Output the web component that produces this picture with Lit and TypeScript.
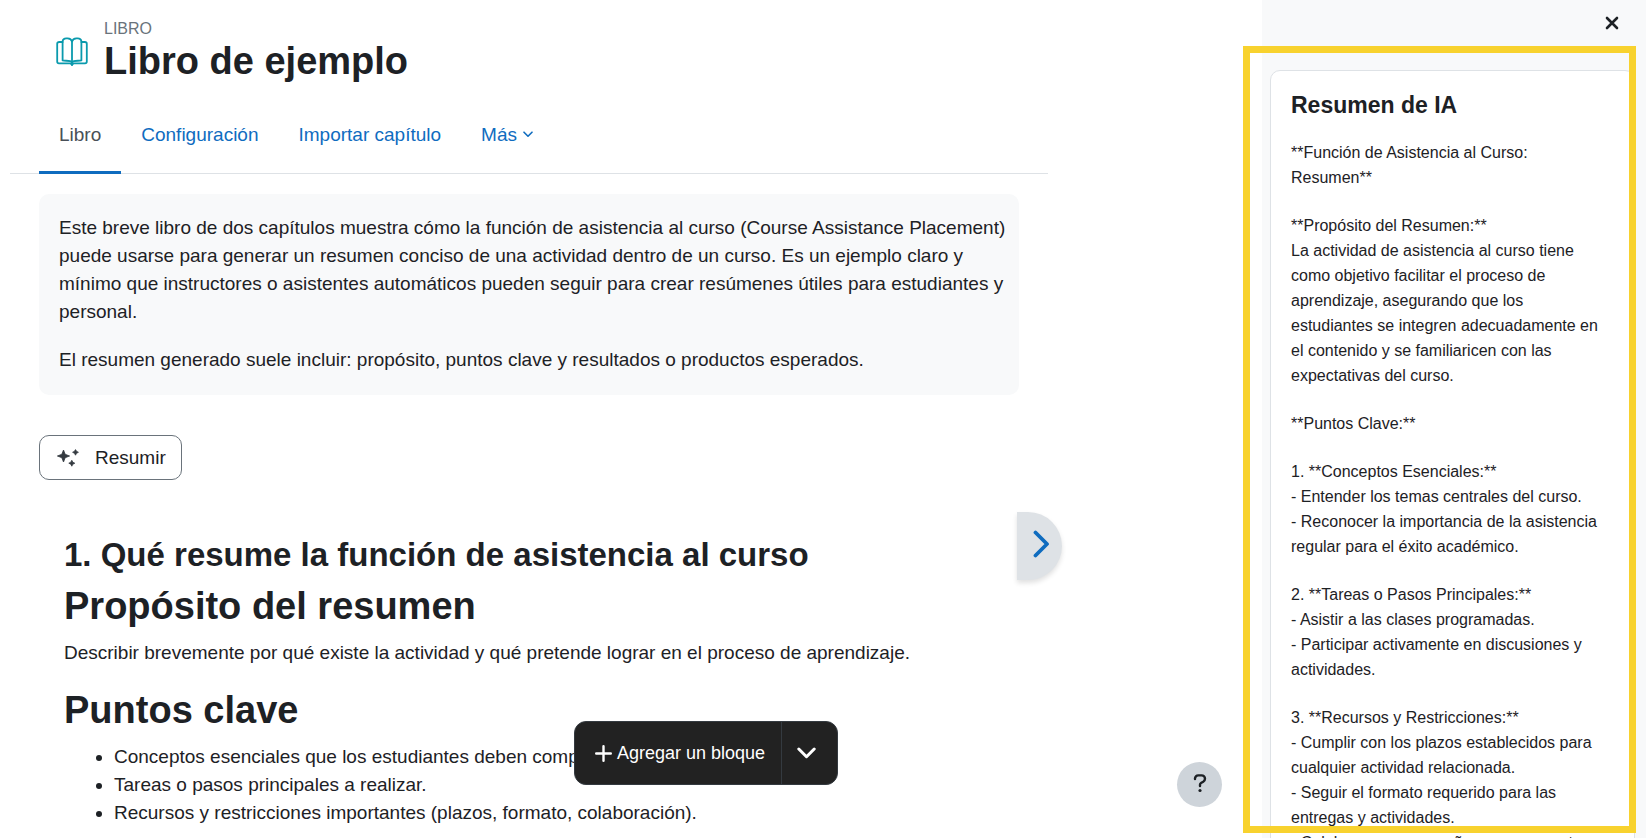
import { LitElement, html, css, svg } from "lit";
import { customElement, state } from "lit/decorators.js";

const SUMMARY: string[][] = [
  ["**Función de Asistencia al Curso: Resumen**"],
  [
    "**Propósito del Resumen:**",
    "La actividad de asistencia al curso tiene como objetivo facilitar el proceso de aprendizaje, asegurando que los estudiantes se integren adecuadamente en el contenido y se familiaricen con las expectativas del curso.",
  ],
  ["**Puntos Clave:**"],
  [
    "1. **Conceptos Esenciales:**",
    "- Entender los temas centrales del curso.",
    "- Reconocer la importancia de la asistencia regular para el éxito académico.",
  ],
  [
    "2. **Tareas o Pasos Principales:**",
    "- Asistir a las clases programadas.",
    "- Participar activamente en discusiones y actividades.",
  ],
  [
    "3. **Recursos y Restricciones:**",
    "- Cumplir con los plazos establecidos para cualquier actividad relacionada.",
    "- Seguir el formato requerido para las entregas y actividades.",
    "- Colaborar con compañeros en proyectos",
  ],
];

const KEY_POINTS = [
  "Conceptos esenciales que los estudiantes deben comprender.",
  "Tareas o pasos principales a realizar.",
  "Recursos y restricciones importantes (plazos, formato, colaboración).",
];

const bookIcon = svg`<svg width="32" height="30" viewBox="0 0 32 30" fill="none" stroke="#0a9aad" stroke-width="1.8" stroke-linejoin="round" stroke-linecap="round" aria-hidden="true">
  <path d="M16 4.600C15.400 2.400 13.600 1.400 11.600 1.400H10.200C8.200 1.400 6.600 2.600 6.600 4.600V23.400C9.400 24.200 14.400 23 16 25.400C17.600 23 22.600 24.200 25.400 23.400V4.600C25.400 2.600 23.800 1.400 21.800 1.400H20.400C18.400 1.400 16.600 2.400 16 4.600Z"/>
  <path d="M16 4.600V28"/>
  <path d="M6.600 5H3.200C1.900 5 1.200 5.700 1.200 6.800V24.600C1.200 25.800 2 26.400 3 26.400H14.400L16 27.800L17.600 26.400H29C30 26.400 30.800 25.800 30.800 24.600V6.800C30.800 5.700 30.100 5 28.800 5H25.400"/>
</svg>`;

const sparkIcon = svg`<svg width="22" height="18" viewBox="0 0 22 18" fill="#343a40" stroke="#343a40" stroke-width=".8" stroke-linejoin="round" aria-hidden="true">
  <path d="M6.500 1L8.200 5.300L12.600 7L8.200 8.700L6.500 13L4.800 8.700L.4 7L4.800 5.300Z"/>
  <path d="M18.500 .6L19.500 2.300L21.400 3.300L19.500 4.300L18.500 6.200L17.500 4.300L15.600 3.300L17.500 2.300Z"/>
  <path d="M14.800 11.300L15.800 13.200L17.800 14.200L15.800 15.200L14.800 17.200L13.800 15.200L11.800 14.200L13.800 13.200Z"/>
</svg>`;

@customElement("book-page")
export class BookPage extends LitElement {
  static styles = css`
    :host { display: block; color: #1d2125; }
    .head { display: flex; align-items: center; gap: 16px; padding: 19px 0 12px 46px; }
    .kind { color: #6a737b; font-size: 16px; line-height: 20px; text-transform: uppercase; }
    .title { margin: 0; font-size: 38px; line-height: 45px; font-weight: 700; }
    .tabs { display: flex; border-bottom: 1px solid #dee2e6; padding: 0 29px; }
    .tab { box-sizing: border-box; height: 78px; padding: 2px 20px 0; display: flex; align-items: center; gap: 6px;
      color: #0f6cbf; text-decoration: none; border-bottom: 3px solid transparent; margin-bottom: -1px; }
    .tab.active { color: #495057; border-bottom-color: #0f6cbf; }
    .intro { margin: 20px 29px 0; padding: 20px 12px 21px 20px; border-radius: 10px; background: #f8f9fa; }
    .intro p { margin: 0; }
    .intro p + p { margin-top: 20px; }
    .summarise { margin: 40px 29px 0; height: 45px; padding: 0 15px 0 17px; display: inline-flex; align-items: center; gap: 16px;
      border: 1px solid #6a737b; border-radius: 10px; background: #fff; color: #1d2125; font: inherit; cursor: pointer; }
    .chapter { margin: 55px 54px 0; }
    .chapter h2, .chapter h3 { margin: 0; font-weight: 700; }
    .chapter h2 { font-size: 33px; line-height: 40px; margin-bottom: 8px; }
    .chapter h3 { font-size: 38px; line-height: 46px; margin-bottom: 10px; }
    .chapter p { margin: 0 0 20px; }
    .chapter ul { margin: 0; padding-left: 50px; }
  `;

  render() {
    return html`
      <header class="head">
        ${bookIcon}
        <div>
          <div class="kind">Libro</div>
          <h1 class="title">Libro de ejemplo</h1>
        </div>
      </header>
      <nav class="tabs" aria-label="Libro">
        <a class="tab active" href="#libro" aria-current="page">Libro</a>
        <a class="tab" href="#configuracion">Configuración</a>
        <a class="tab" href="#importar">Importar capítulo</a>
        <a class="tab" href="#mas">Más
          <svg width="10" height="7" viewBox="0 0 10 7" fill="none" stroke="currentColor" stroke-width="1.600" stroke-linecap="round" stroke-linejoin="round" aria-hidden="true"><path d="M1 1.200L5 5.200L9 1.200"/></svg>
        </a>
      </nav>
      <section class="intro">
        <p>Este breve libro de dos capítulos muestra cómo la función de asistencia al curso (Course Assistance Placement) puede usarse para generar un resumen conciso de una actividad dentro de un curso. Es un ejemplo claro y mínimo que instructores o asistentes automáticos pueden seguir para crear resúmenes útiles para estudiantes y personal.</p>
        <p>El resumen generado suele incluir: propósito, puntos clave y resultados o productos esperados.</p>
      </section>
      <button class="summarise" type="button">${sparkIcon}<span>Resumir</span></button>
      <article class="chapter">
        <h2>1. Qué resume la función de asistencia al curso</h2>
        <h3>Propósito del resumen</h3>
        <p>Describir brevemente por qué existe la actividad y qué pretende lograr en el proceso de aprendizaje.</p>
        <h3>Puntos clave</h3>
        <ul>${KEY_POINTS.map((point) => html`<li>${point}</li>`)}</ul>
      </article>
    `;
  }
}

@customElement("summary-drawer")
export class SummaryDrawer extends LitElement {
  static styles = css`
    :host { display: flex; flex-direction: column; height: 100%; background: #f8f9fa; color: #1d2125; }
    .bar { display: flex; justify-content: flex-end; padding: 13px 24px 13px 0; }
    .close { width: 20px; height: 20px; padding: 0; border: 0; background: none; display: grid; place-items: center; cursor: pointer; }
    .card { flex: 1 0 auto; margin: 24px 11px 0 8px; padding: 20px 28px 20px 20px; border: 1px solid #dee2e6; border-radius: 10px; background: #fff; }
    .heading { margin: 0 0 21px; font-size: 23px; line-height: 28px; font-weight: 700; }
    .text { display: grid; gap: 23px; font-size: 16px; line-height: 25px; }
    .text p { margin: 0; }
  `;

  render() {
    return html`
      <div class="bar">
        <button class="close" type="button" aria-label="Cerrar">
          <svg width="14" height="14" viewBox="0 0 14 14" fill="none" stroke="#1d2125" stroke-width="2.600" stroke-linecap="round" aria-hidden="true"><path d="M2 2L12 12M12 2L2 12"/></svg>
        </button>
      </div>
      <section class="card">
        <h2 class="heading">Resumen de IA</h2>
        <div class="text">
          ${SUMMARY.map((block) => html`<div>${block.map((line) => html`<p>${line}</p>`)}</div>`)}
        </div>
      </section>
    `;
  }
}

@customElement("app-root")
export class AppRoot extends LitElement {
  @state() private drawerOpen = true;

  static styles = css`
    :host { display: block; font-family: "Liberation Sans", Arial, sans-serif; font-size: 19px; line-height: 28px; }
    .shell { position: relative; display: grid; grid-template-columns: minmax(0, 1fr) 384px; height: 100vh; overflow: hidden; background: #fff; }
    .main { position: relative; min-width: 0; overflow: hidden; }
    .page { display: block; max-width: 1038px; margin-left: 10px; }
    .drawer { min-width: 0; min-height: 0; overflow: hidden; }
    .next { position: absolute; left: 1017px; top: 512px; width: 45px; height: 68px; box-sizing: border-box; padding: 0 0 5px 3px; display: grid; place-items: center;
      background: #dee2e6; border-radius: 0 34px 34px 0; box-shadow: 0 3px 5px rgba(0, 0, 0, 0.12); }
    .blocks { position: absolute; left: 574px; bottom: 53px; height: 64px; display: flex; box-sizing: border-box; overflow: hidden;
      border: 1px solid #343a40; border-radius: 12px; background: #222; }
    .blocks button { border: 0; background: none; color: #fff; font: inherit; font-size: 18px; display: flex; align-items: center; gap: 5px; cursor: pointer; }
    .add { padding: 0 16px 0 20px; }
    .blocks .more { width: 56px; padding: 0 0 0 15px; border-left: 1px solid #343a40; }
    .help { position: absolute; right: 40px; bottom: 31px; width: 45px; height: 45px; padding: 0 0 2px; border: 0; border-radius: 50%;
      background: #ced4da; display: grid; place-items: center; cursor: pointer; }
    .marker { position: absolute; top: 46px; right: 10px; bottom: 5px; width: 393px; box-sizing: border-box;
      border: 7px solid #f8d22e; pointer-events: none; }
  `;

  render() {
    return html`
      <div class="shell">
        <main class="main">
          <book-page class="page"></book-page>
          <a class="next" href="#siguiente" aria-label="Siguiente">
            <svg width="17" height="28" viewBox="0 0 17 28" fill="none" stroke="#0f6cbf" stroke-width="3.800" stroke-linecap="round" stroke-linejoin="round" aria-hidden="true"><path d="M2.500 2.500L14 14L2.500 25.500"/></svg>
          </a>
          <div class="blocks">
            <button class="add" type="button">
              <svg width="17" height="17" viewBox="0 0 17 17" fill="none" stroke="#fff" stroke-width="2.400" stroke-linecap="round" aria-hidden="true"><path d="M8.500 1.200V15.800M1.200 8.500H15.800"/></svg>
              <span>Agregar un bloque</span>
            </button>
            <button class="more" type="button" aria-label="Más opciones">
              <svg width="19" height="12" viewBox="0 0 19 12" fill="none" stroke="#fff" stroke-width="3" stroke-linecap="round" stroke-linejoin="round" aria-hidden="true"><path d="M1.800 2L9.500 9.700L17.200 2"/></svg>
            </button>
          </div>
          <button class="help" type="button" aria-label="Ayuda">
            <svg width="14" height="19" viewBox="0 0 14 19" fill="none" stroke="#1d2125" stroke-width="2.400" stroke-linecap="round" aria-hidden="true">
              <path d="M2 5V4.600C2 2.800 3.400 1.400 5.200 1.400H8.600C10.600 1.400 12 2.900 12 4.700C12 6 11.300 7 10.200 7.700L8 9C7.300 9.400 7 10 7 10.700V12"/>
              <circle cx="7" cy="16.500" r="1.600" fill="#1d2125" stroke="none"/>
            </svg>
          </button>
        </main>
        <aside class="drawer">${this.drawerOpen ? html`<summary-drawer></summary-drawer>` : null}</aside>
        <div class="marker"></div>
      </div>
    `;
  }
}
